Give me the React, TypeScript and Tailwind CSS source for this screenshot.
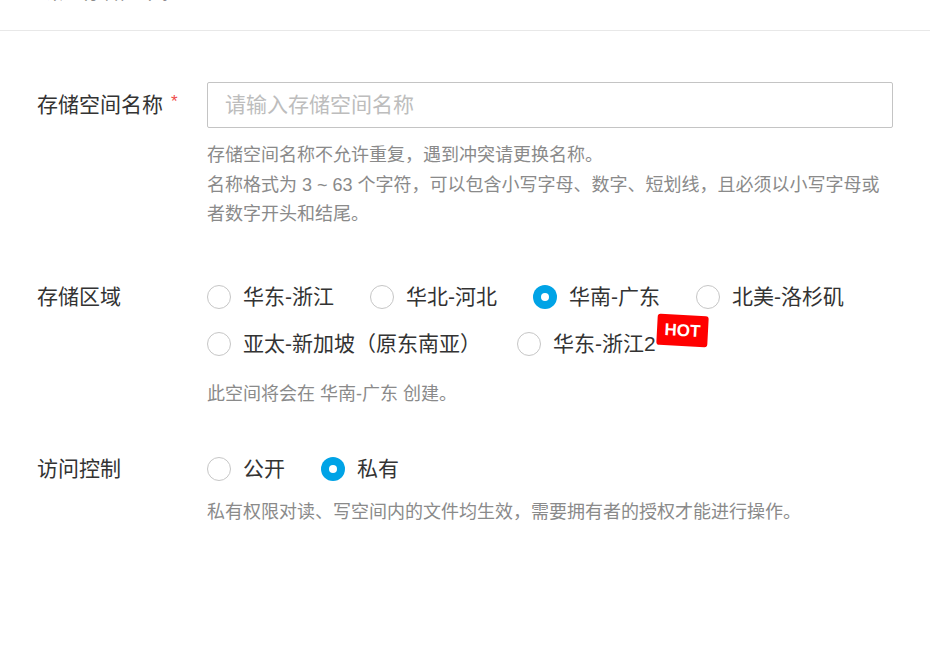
import React from "react";

const font = { fontFamily: '"Liberation Sans", "Noto Sans CJK SC", sans-serif' };

function Radio({ label, checked, hot }: { label: string; checked?: boolean; hot?: boolean }) {
  return (
    <label className="flex items-center h-[47px] mr-[36px] cursor-pointer">
      {checked ? (
        <span className="w-[24px] h-[24px] rounded-full bg-[#00a3e6] flex items-center justify-center shrink-0">
          <span className="w-[8px] h-[8px] rounded-full bg-white" />
        </span>
      ) : (
        <span className="w-[24px] h-[24px] rounded-full border border-[#c6c6c6] bg-white shrink-0" />
      )}
      <span className="relative ml-[12px] text-[21px] text-[#333] whitespace-nowrap">
        {label}
        {hot && (
          <span className="absolute left-full top-[-13px] ml-[1px] w-[51px] h-[31px] rounded-[3px] bg-[#ff0000] text-white text-[17px] font-semibold leading-[31px] text-center rotate-[3deg]">
            HOT
          </span>
        )}
      </span>
    </label>
  );
}

export default function App() {
  return (
    <div className="w-[930px] h-[665px] bg-white overflow-hidden" style={font}>
      <div className="h-[31px] border-b border-[#e8e8e8] overflow-hidden px-[37px]">
        <div className="text-[22px] leading-[22px] -mt-[20px] text-[#333]">新建存储空间</div>
      </div>

      <div className="pl-[37px] pr-[37px]">
        {/* 名称 */}
        <div className="flex mt-[51px]">
          <div className="w-[170px] h-[46px] flex items-center text-[21px] text-[#333] shrink-0">
            存储空间名称
            <span className="ml-[8px] text-[#ef4b4b] text-[17px] -mt-[6px]">*</span>
          </div>
          <div className="flex-1">
            <input
              className="w-full h-[46px] border border-[#c4c4c4] rounded-[2px] pl-[17px] text-[21px] text-[#333] placeholder:text-[#bdbdbd] outline-none"
              placeholder="请输入存储空间名称"
              style={font}
            />
            <div className="mt-[13px] text-[18px] leading-[29.5px] text-[#8a8a8a] whitespace-nowrap">
              <div>存储空间名称不允许重复，遇到冲突请更换名称。</div>
              <div>名称格式为 3 ~ 63 个字符，可以包含小写字母、数字、短划线，且必须以小写字母或</div>
              <div>者数字开头和结尾。</div>
            </div>
          </div>
        </div>

        {/* 区域 */}
        <div className="flex mt-[44px]">
          <div className="w-[170px] h-[47px] flex items-center text-[21px] text-[#333] shrink-0">存储区域</div>
          <div className="flex-1">
            <div className="flex flex-wrap">
              <Radio label="华东-浙江" />
              <Radio label="华北-河北" />
              <Radio label="华南-广东" checked />
              <Radio label="北美-洛杉矶" />
              <Radio label="亚太-新加坡（原东南亚）" />
              <Radio label="华东-浙江2" hot />
            </div>
            <div className="mt-[12px] text-[18px] leading-[29.5px] text-[#8a8a8a]">此空间将会在 华南-广东 创建。</div>
          </div>
        </div>

        {/* 访问控制 */}
        <div className="flex mt-[36px]">
          <div className="w-[170px] h-[47px] flex items-center text-[21px] text-[#333] shrink-0">访问控制</div>
          <div className="flex-1">
            <div className="flex">
              <Radio label="公开" />
              <Radio label="私有" checked />
            </div>
            <div className="mt-[6px] text-[18px] leading-[29.5px] text-[#8a8a8a]">
              私有权限对读、写空间内的文件均生效，需要拥有者的授权才能进行操作。
            </div>
          </div>
        </div>
      </div>
    </div>
  );
}
